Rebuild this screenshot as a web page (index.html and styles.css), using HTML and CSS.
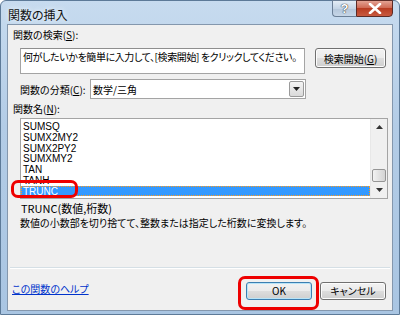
FILE: index.html
```html
<!DOCTYPE html>
<html>
<head>
    <meta charset="utf-8">
    <title>関数の挿入</title>
    <link rel="stylesheet" href="styles.css">
</head>
<body>
    <div class="window">
        <div class="titlebar">
            <span class="title">関数の挿入</span>
            <div class="caption-btns">
                <div class="cap-help">?</div>
                <div class="cap-close">
                    <svg width="14" height="11" viewBox="0 0 14 11">
                        <path d="M2 1 L12 10 M12 1 L2 10" stroke="#ffffff" stroke-width="2.6" stroke-linecap="round"/>
                    </svg>
                </div>
            </div>
        </div>
        <div class="client">
            <div class="label">関数の検索(<u>S</u>):</div>
            <div class="search-row">
                <div class="textbox">何がしたいかを簡単に入力して、[検索開始] をクリックしてください。</div>
                <button class="btn btn-search">検索開始(<u>G</u>)</button>
            </div>
            <div class="category-row">
                <span class="cat-label">関数の分類(<u>C</u>):</span>
                <div class="combo">
                    <span>数学/三角</span>
                    <div class="combo-arrow">
                        <svg width="7" height="4" viewBox="0 0 7 4"><path d="M0 0 H7 L3.5 4 Z" fill="#222"/></svg>
                    </div>
                </div>
            </div>
            <div class="label label-name">関数名(<u>N</u>):</div>
            <div class="listbox">
                <div class="items">
                    <div class="item">SUMSQ</div>
                    <div class="item">SUMX2MY2</div>
                    <div class="item">SUMX2PY2</div>
                    <div class="item">SUMXMY2</div>
                    <div class="item">TAN</div>
                    <div class="item">TANH</div>
                    <div class="item selected">TRUNC</div>
                </div>
                <div class="scrollbar">
                    <div class="sb-arrow">
                        <svg width="7" height="4" viewBox="0 0 7 4"><path d="M0 4 H7 L3.5 0 Z" fill="#333"/></svg>
                    </div>
                    <div class="sb-track"></div>
                    <div class="sb-thumb"></div>
                    <div class="sb-arrow">
                        <svg width="7" height="4" viewBox="0 0 7 4"><path d="M0 0 H7 L3.5 4 Z" fill="#333"/></svg>
                    </div>
                </div>
            </div>
            <div class="syntax">TRUNC(数値,桁数)</div>
            <div class="desc">数値の小数部を切り捨てて、整数または指定した桁数に変換します。</div>
            <div class="spacer"></div>
            <div class="separator"></div>
            <div class="bottom-row">
                <a class="help-link" href="#">この関数のヘルプ</a>
                <div class="bottom-btns">
                    <button class="btn btn-ok">OK</button>
                    <button class="btn btn-cancel">キャンセル</button>
                </div>
            </div>
        </div>
        <div class="mark mark-trunc"></div>
        <div class="mark mark-ok"></div>
    </div>
</body>
</html>
```

FILE: styles.css
```css
body {
    margin: 0;
    width: 400px;
    height: 315px;
    overflow: hidden;
    font-family: "Liberation Sans", "Noto Sans CJK JP", sans-serif;
    font-size: 10px;
    font-feature-settings: "palt";
    color: #000;
}

.window {
    position: relative;
    width: 400px;
    height: 315px;
    box-sizing: border-box;
    background: linear-gradient(to bottom, #c7dbef 0%, #b3cce6 40%, #a9c5e2 100%);
    border: 1px solid #5d7a98;
    border-radius: 6px 6px 0 0;
    display: flex;
    flex-direction: column;
}

.titlebar {
    height: 23px;
    display: flex;
    justify-content: space-between;
    align-items: flex-start;
}

.title {
    font-family: "Noto Sans CJK JP", sans-serif;
    font-size: 12px;
    margin: 5px 0 0 7px;
    color: #111;
    text-shadow: 0 0 4px #e8f2fb, 0 0 6px #e8f2fb;
}

.caption-btns {
    display: flex;
    margin-right: 6px;
    margin-top: -1px;
}

.cap-help {
    width: 24px;
    height: 17px;
    box-sizing: border-box;
    border: 1px solid #6b7f96;
    border-right: none;
    border-radius: 0 0 0 4px;
    background: linear-gradient(to bottom, #e4edf6, #c5d5e6 50%, #b4c6da 51%, #c6d6e7);
    color: #fff;
    font-size: 13px;
    font-weight: bold;
    text-align: center;
    line-height: 16px;
    text-shadow: 0 0 1px #222, 0 0 1px #222;
}

.cap-close {
    width: 37px;
    height: 17px;
    box-sizing: border-box;
    border: 1px solid #5c2b26;
    border-radius: 0 0 4px 0;
    background: linear-gradient(to bottom, #e3a293, #cf6a55 45%, #b83c22 50%, #c85a3f);
    display: flex;
    justify-content: center;
    align-items: center;
}

.client {
    flex: 1;
    margin: 0 6px 3px 6px;
    border: 1px solid #8497ad;
    background: #f0f0f0;
    display: flex;
    flex-direction: column;
    font-family: "Noto Sans CJK JP", sans-serif;
}

.label {
    margin: 3px 0 0 5px;
    line-height: 14px;
    white-space: nowrap;
}

.search-row {
    display: flex;
    align-items: flex-start;
    margin: 6px 0 0 12px;
}

.textbox {
    width: 285px;
    height: 26px;
    box-sizing: border-box;
    border: 1px solid #a4a4a4;
    border-top-color: #8e8e8e;
    background: #fff;
    padding: 1px 0 0 2px;
    line-height: 13px;
    letter-spacing: -0.4px;
    white-space: nowrap;
    overflow: hidden;
}

.btn {
    font-family: "Noto Sans CJK JP", sans-serif;
    font-size: 10px;
    font-feature-settings: "palt";
    box-sizing: border-box;
    height: 20px;
    padding: 0;
    border: 1px solid #707070;
    border-radius: 3px;
    background: linear-gradient(to bottom, #f2f2f2 0%, #ebebeb 50%, #dddddd 51%, #cfcfcf 100%);
    box-shadow: inset 0 0 0 1px #fcfcfc;
    color: #000;
    white-space: nowrap;
}

.btn-search {
    width: 71px;
    margin-left: 10px;
}

.category-row {
    display: flex;
    align-items: center;
    margin: 5px 0 0 12px;
    white-space: nowrap;
}

.cat-label {
    width: 70px;
}

.combo {
    width: 216px;
    height: 20px;
    box-sizing: border-box;
    border: 1px solid #a4a4a4;
    background: #fff;
    display: flex;
    justify-content: space-between;
    align-items: center;
    padding-left: 2px;
}

.combo-arrow {
    width: 15px;
    height: 16px;
    margin-right: 1px;
    box-sizing: border-box;
    border: 1px solid #9a9a9a;
    border-radius: 2px;
    background: linear-gradient(to bottom, #f4f4f4, #dadada);
    display: flex;
    justify-content: center;
    align-items: center;
}

.label-name {
    margin-top: 3px;
}

.listbox {
    margin: 2px 0 0 12px;
    width: 368px;
    height: 81px;
    box-sizing: border-box;
    border: 1px solid #a4a4a4;
    background: #fff;
    display: flex;
}

.items {
    flex: 1;
    padding-top: 2px;
    overflow: hidden;
    font-family: "Liberation Sans", sans-serif;
    font-size: 10px;
}

.item {
    height: 10.8px;
    line-height: 11px;
    padding-left: 2px;
}

.item.selected {
    height: 10px;
    background: #3399ff;
    color: #fff;
    outline: 1px dotted #ff9a1a;
    outline-offset: -1px;
}

.scrollbar {
    width: 16px;
    background: #f0f0f0;
    border-left: 1px solid #e8e8e8;
    display: flex;
    flex-direction: column;
}

.sb-arrow {
    height: 16px;
    display: flex;
    justify-content: center;
    align-items: center;
}

.sb-track {
    flex: 1;
}

.sb-thumb {
    height: 13px;
    margin: 0 1px;
    box-sizing: border-box;
    border: 1px solid #959595;
    border-radius: 2px;
    background: linear-gradient(to right, #f3f3f3, #e2e2e2 50%, #d4d4d4);
}

.syntax {
    margin: 3px 0 0 13px;
    line-height: 13px;
    font-size: 11px;
}

.desc {
    margin: 1px 0 0 12px;
    line-height: 13px;
}

.spacer {
    flex: 1;
}

.separator {
    margin: 0 2px;
    border-top: 1px solid #d5dfe5;
    border-bottom: 1px solid #ffffff;
}

.bottom-row {
    height: 41px;
    display: flex;
    justify-content: space-between;
    align-items: center;
    padding: 0 6px 0 4px;
}

.help-link {
    color: #0033cc;
    text-decoration: underline;
    margin-top: -2px;
}

.bottom-btns {
    display: flex;
    gap: 8px;
    margin-top: 2px;
}

.btn-ok {
    width: 66px;
    height: 18px;
    border-color: #3c7fb1;
    box-shadow: inset 0 0 0 1px #b8e4f8;
}

.btn-cancel {
    width: 66px;
    height: 18px;
}

.mark {
    position: absolute;
    border: 3px solid #ee0000;
    border-radius: 7px;
    box-sizing: border-box;
}

.mark-trunc {
    left: 10px;
    top: 179px;
    width: 67px;
    height: 18px;
}

.mark-ok {
    left: 237px;
    top: 275px;
    width: 81px;
    height: 34px;
}
```
